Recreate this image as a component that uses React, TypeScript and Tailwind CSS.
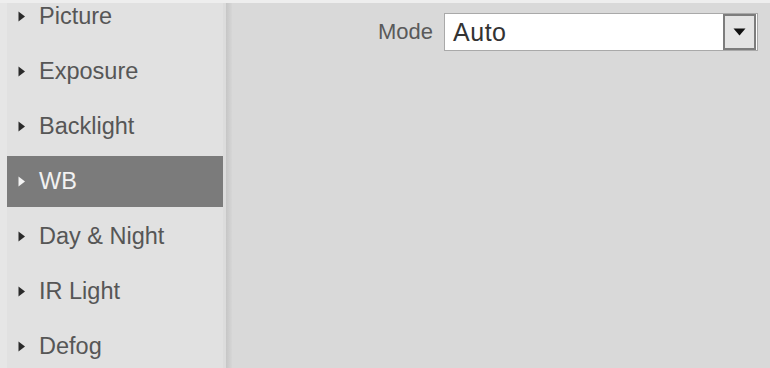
import React from "react";

const items = ["Picture", "Exposure", "Backlight", "WB", "Day & Night", "IR Light", "Defog"];

function Tri({ color }: { color: string }) {
  return (
    <svg width="8" height="11" viewBox="0 0 8 11" className="shrink-0">
      <path d="M0.5 0.5 L7 5.5 L0.5 10.5 Z" fill={color} />
    </svg>
  );
}

export default function App() {
  return (
    <div
      className="w-[770px] h-[368px] overflow-hidden flex flex-col bg-[#d9d9d9]"
      style={{ fontFamily: '"Liberation Sans", Arial, sans-serif' }}
    >
      <div className="h-[3px] bg-[#eeeeee] shrink-0" />
      <div className="flex flex-1 min-h-0">
        <div className="w-[7px] bg-[#e6e6e6] shrink-0" />
        <div className="w-[216px] bg-[#e1e1e1] shrink-0 overflow-hidden">
          <div className="-mt-[14px] flex flex-col">
            {items.map((it) => {
              const active = it === "WB";
              return (
                <div key={it} className="h-[55px] py-[2px] flex">
                  <div
                    className={
                      "flex-1 flex items-center pl-[11px] gap-[13px] " +
                      (active ? "bg-[#7b7b7b]" : "")
                    }
                  >
                    <Tri color={active ? "#f4f4f4" : "#2a2a2a"} />
                    <span
                      className={
                        "text-[23.5px] leading-none " +
                        (active ? "text-[#f2f2f2]" : "text-[#565656]")
                      }
                    >
                      {it}
                    </span>
                  </div>
                </div>
              );
            })}
          </div>
        </div>
        <div className="w-[3px] bg-[#dcdcdc] shrink-0" />
        <div className="w-[6px] bg-gradient-to-r from-[#c6c6c6] to-[#d6d6d6] shrink-0" />
        <div className="flex-1 relative">
          <div className="flex items-center pl-[146px] pt-[10px]">
            <span className="text-[22px] text-[#5a5a5a] leading-none mr-[11px]">Mode</span>
            <div className="w-[314px] h-[38px] bg-white border border-[#a9a9a9] flex items-center justify-between pl-[8px] pr-[1px]">
              <span className="text-[25px] tracking-[0.5px] text-[#333333] leading-none">Auto</span>
              <div className="w-[33px] h-[36px] bg-[#e4e4e4] border-2 border-[#7d7d7d] flex items-center justify-center">
                <svg width="13" height="8" viewBox="0 0 13 8">
                  <path d="M0.5 0.5 L12.5 0.5 L6.5 7.5 Z" fill="#111111" />
                </svg>
              </div>
            </div>
          </div>
        </div>
      </div>
    </div>
  );
}
